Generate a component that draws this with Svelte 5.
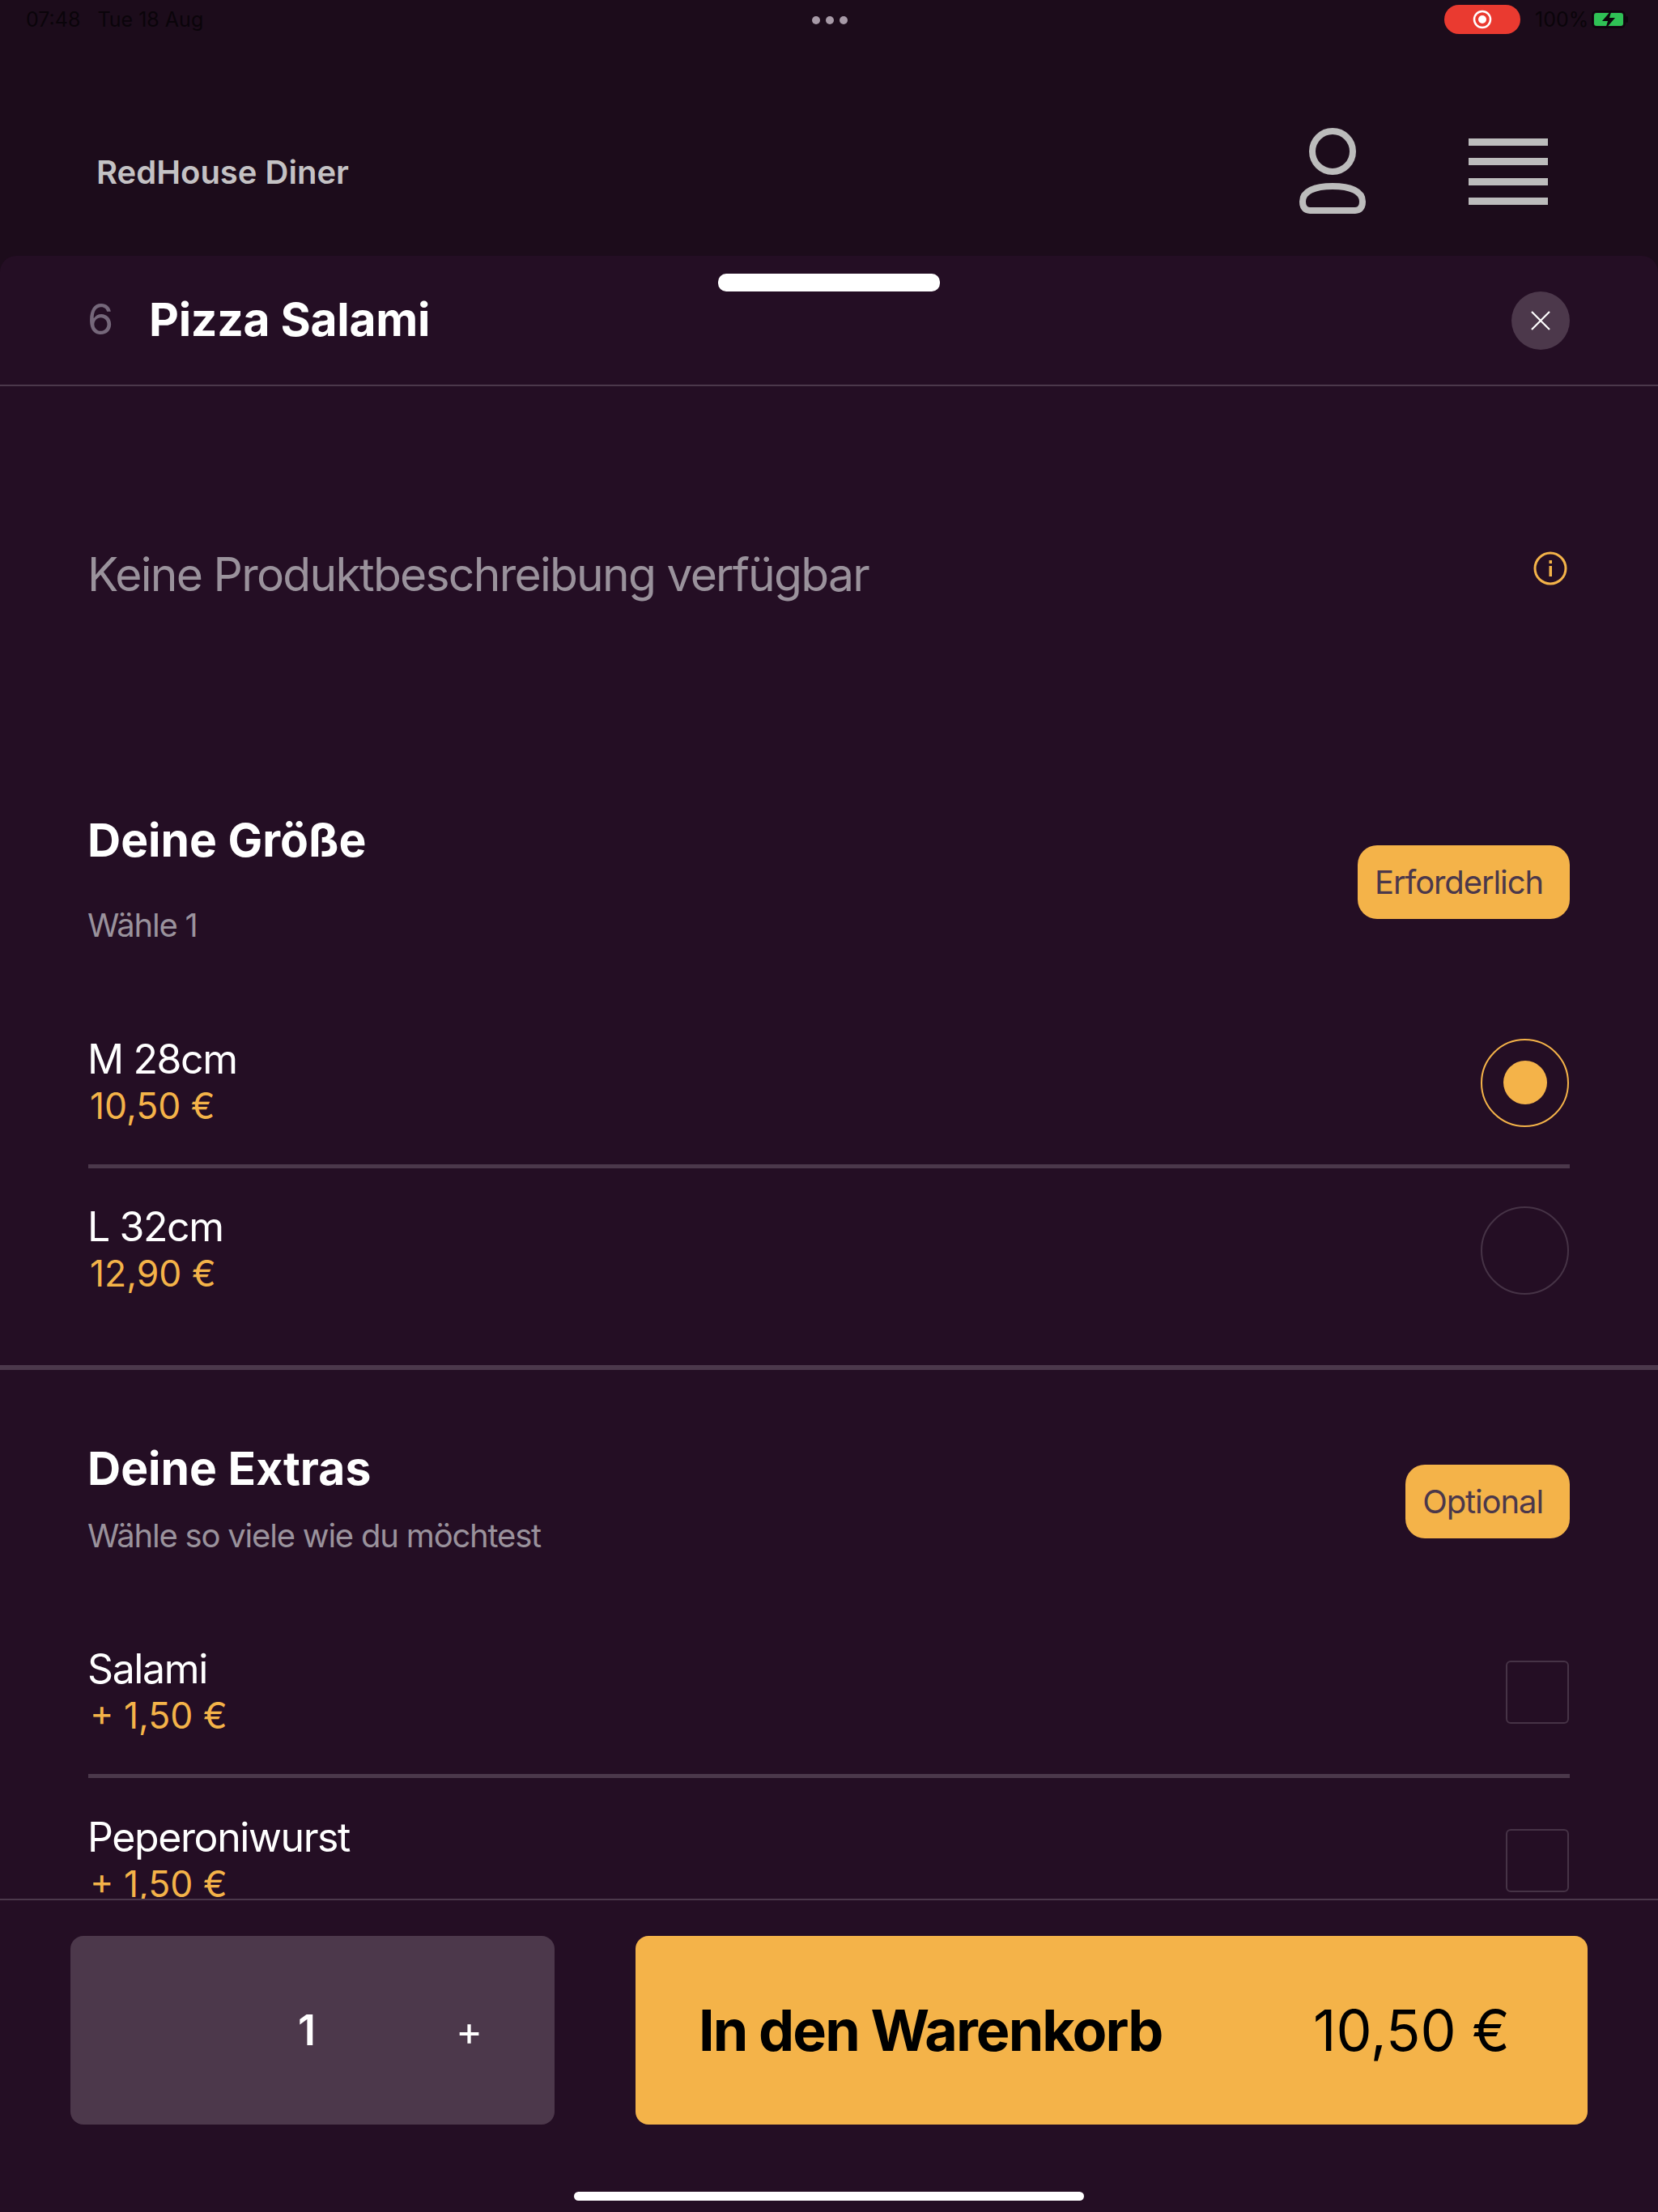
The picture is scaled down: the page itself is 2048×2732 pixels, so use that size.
<script>
  const sizes = [
    { name: 'M 28cm', price: '10,50 €', selected: true },
    { name: 'L 32cm', price: '12,90 €', selected: false }
  ];
  const extras = [
    { name: 'Salami', price: '+ 1,50 €' },
    { name: 'Peperoniwurst', price: '+ 1,50 €' }
  ];
</script>

<div class="page">
  <div class="top">
    <div class="status">
      <div class="time">07:48&nbsp;&nbsp; Tue 18 Aug</div>
      <div class="dots"><i></i><i></i><i></i></div>
      <div class="status-right">
        <div class="rec"><svg width="24" height="24" viewBox="0 0 24 24"><circle cx="12" cy="12" r="10" fill="none" stroke="#fff" stroke-width="2.5"/><circle cx="12" cy="12" r="5" fill="#fff"/></svg></div>
        <span class="pct">100%</span>
        <svg class="batt" width="46" height="24" viewBox="0 0 46 24">
          <rect x="1" y="2" width="40" height="20" rx="5" fill="none" stroke="#0d060d" stroke-width="2"/>
          <rect x="3" y="4" width="36" height="16" rx="3" fill="#2fc255"/>
          <rect x="42" y="8" width="3" height="8" rx="1.5" fill="#0d060d"/>
          <path d="M25 0 L13 14 H20 L17 24 L29 10 H22 Z" fill="#0d060d"/>
        </svg>
      </div>
    </div>
    <header class="bar">
      <div class="brand">RedHouse Diner</div>
      <div class="bar-icons">
        <svg class="person" width="84" height="108" viewBox="0 0 84 108" fill="none" stroke="#bcbcbc" stroke-width="8">
          <circle cx="42" cy="29" r="25"/>
          <path d="M5 91 C5 78 20 72 42 72 C64 72 79 78 79 91 C79 98 76 102 70 102 H14 C8 102 5 98 5 91 Z"/>
        </svg>
        <div class="burger"><i></i><i></i><i></i><i></i></div>
      </div>
    </header>
  </div>

  <main class="sheet">
    <div class="handle"></div>
    <div class="sheet-head">
      <span class="num">6</span>
      <h1>Pizza Salami</h1>
      <button class="close" aria-label="Schließen">
        <svg width="28" height="28" viewBox="0 0 28 28"><path d="M3 3 L25 25 M25 3 L3 25" stroke="#fff" stroke-width="2.2" fill="none"/></svg>
      </button>
    </div>

    <div class="desc">
      <p>Keine Produktbeschreibung verfügbar</p>
      <svg class="info" width="42" height="42" viewBox="0 0 42 42" fill="none">
        <circle cx="21" cy="21" r="19" stroke="#f4b349" stroke-width="3"/>
        <rect x="19.5" y="18" width="3.5" height="13" fill="#f4b349"/>
        <rect x="19.5" y="11" width="3.5" height="4" fill="#f4b349"/>
      </svg>
    </div>

    <section class="group size-group">
      <div class="group-head">
        <div>
          <h2>Deine Größe</h2>
          <p class="hint hint-size">Wähle 1</p>
        </div>
        <span class="pill">Erforderlich</span>
      </div>
      <div class="rows size-rows">
        {#each sizes as s, i}
          <div class="row" class:ruled={i < sizes.length - 1}>
            <div class="label">
              <div class="name">{s.name}</div>
              <div class="price">{s.price}</div>
            </div>
            <div class="radio" class:on={s.selected}>{#if s.selected}<i></i>{/if}</div>
          </div>
        {/each}
      </div>
    </section>

    <section class="group extra-group">
      <div class="group-head">
        <div>
          <h2>Deine Extras</h2>
          <p class="hint">Wähle so viele wie du möchtest</p>
        </div>
        <span class="pill">Optional</span>
      </div>
      <div class="rows extra-rows">
        {#each extras as e, i}
          <div class="row" class:ruled={i < extras.length - 1}>
            <div class="label">
              <div class="name">{e.name}</div>
              <div class="price">{e.price}</div>
            </div>
            <div class="check"></div>
          </div>
        {/each}
      </div>
    </section>
  </main>

  <footer class="foot">
    <div class="actions">
      <div class="qty">
        <span class="count">1</span>
        <span class="plus">+</span>
      </div>
      <button class="add">
        <span class="add-label">In den Warenkorb</span>
        <span class="add-price">10,50 €</span>
      </button>
    </div>
    <div class="home"></div>
  </footer>
</div>

<style>
  :global(body) { margin: 0; background: #1c0c1b; }
  .page {
    width: 2048px; height: 2732px; display: flex; flex-direction: column; overflow: hidden;
    font-family: Inter, "Liberation Sans", sans-serif; color: #fff; background: #1c0c1b;
  }
  h1, h2, p { margin: 0; font: inherit; }
  button { border: 0; padding: 0; font: inherit; color: inherit; }

  .top { height: 316px; flex: none; display: flex; flex-direction: column; }
  .status { height: 48px; display: flex; align-items: center; justify-content: space-between; padding: 0 36px 0 32px; position: relative; }
  .time { font-size: 25px; color: #0a040a; }
  .dots { position: absolute; left: 1003px; top: 20px; display: flex; gap: 7px; }
  .dots i { width: 10px; height: 10px; border-radius: 50%; background: #a79aa7; }
  .status-right { display: flex; align-items: center; }
  .rec { width: 94px; height: 36px; border-radius: 18px; background: #ea3a30; display: flex; align-items: center; justify-content: center; }
  .pct { font-size: 25px; color: #0a040a; margin-left: 18px; width: 70px; }

  .bar { flex: 1; display: flex; align-items: center; justify-content: space-between; padding: 60px 136px 0 119px; }
  .brand { font-size: 40px; font-weight: 600; color: #c4c2c4; }
  .bar-icons { display: flex; align-items: center; gap: 126px; }
  .person { display: block; }
  .burger { width: 98px; display: flex; flex-direction: column; gap: 15.5px; }
  .burger i { display: block; height: 9px; background: #bcbcbc; }

  .sheet { flex: 1; min-height: 0; position: relative; overflow: hidden; background: #240e24; border-radius: 20px 20px 0 0; }
  .handle { position: absolute; left: 887px; top: 22px; width: 274px; height: 22px; border-radius: 10px; background: #fff; }
  .sheet-head { height: 159px; display: flex; align-items: center; padding: 0 109px; border-bottom: 2px solid #4b384b; }
  .num { font-size: 52px; color: #75677a; width: 77px; margin-left: -1px; margin-top: -2px; }
  h1 { font-size: 57px; font-weight: 700; letter-spacing: -0.3px; flex: 1; margin: -3px 0 0 -1px; }
  .close { width: 72px; height: 72px; border-radius: 50%; background: #4c384b; display: flex; align-items: center; justify-content: center; }

  .desc { box-sizing: border-box; display: flex; justify-content: space-between; align-items: center; padding: 0 109px 61px; height: 526px; }
  .desc p { font-size: 57px; letter-spacing: -1.75px; color: #9a929c; margin-left: -1px; }
  .info { margin-right: 3px; margin-top: -15px; }

  .group { padding: 0 109px; }
  .size-group { border-bottom: 6px solid #4b384b; padding-bottom: 41px; }
  .group-head { display: flex; justify-content: space-between; align-items: center; }
  h2 { font-size: 57px; font-weight: 700; margin-left: -1px; }
  .hint { font-size: 40px; letter-spacing: -1.2px; color: #9a929c; margin: 24px 0 0 -1px; }
  .hint-size { margin-top: 46px; }
  .pill { background: #f4b349; color: #4b384b; font-size: 40px; letter-spacing: -1.1px; height: 91px; border-radius: 24px; padding: 0 33px 0 21px; display: flex; align-items: center; margin-top: 8px; }

  .rows { display: flex; flex-direction: column; }
  .size-rows { margin-top: 69px; }
  .row { display: flex; justify-content: space-between; align-items: center; padding: 45px 0; }
  .row.ruled { border-bottom: 5px solid #4b384b; }
  .name { font-size: 50px; line-height: 54px; letter-spacing: -1.4px; margin-left: -1px; }
  .price { font-size: 44.5px; line-height: 54px; margin: 4px 0 0 2px; color: #f4b349; }
  .radio { width: 109px; height: 109px; box-sizing: border-box; border-radius: 50%; border: 2px solid #463346; display: flex; align-items: center; justify-content: center; margin-right: 1px; }
  .radio.on { border-color: #f4b349; }
  .radio i { width: 54px; height: 54px; border-radius: 50%; background: #f4b349; }

  .extra-group { padding-top: 87px; }
  .extra-rows { margin-top: 67px; }
  .extra-rows .row { padding: 46px 0 45px; }
  .check { width: 78px; height: 78px; box-sizing: border-box; border: 2px solid #463346; border-radius: 6px; margin-right: 1px; }

  .foot { height: 387px; flex: none; box-sizing: border-box; background: #240e24; border-top: 2px solid #4b384b; display: flex; flex-direction: column; align-items: center; position: relative; margin-top: -1px; }
  .actions { width: 100%; box-sizing: border-box; padding: 44px 87px 0; display: flex; gap: 100px; height: 277px; }
  .qty { width: 598px; height: 233px; border-radius: 16px; background: #4c384b; position: relative; display: flex; align-items: center; font-size: 52px; font-weight: 600; }
  .count { margin-left: 281px; }
  .plus { margin-left: 173px; font-weight: 400; font-size: 50px; }
  .add { flex: 1; height: 233px; border-radius: 16px; background: #f4b349; color: #000; display: flex; align-items: center; justify-content: space-between; padding: 0 96px 0 78px; }
  .add-label { font-size: 70px; font-weight: 700; letter-spacing: -1.9px; }
  .add-price { font-size: 70px; font-weight: 400; }
  .home { width: 630px; height: 11px; border-radius: 6px; background: #fff; margin-top: 83px; }
</style>
